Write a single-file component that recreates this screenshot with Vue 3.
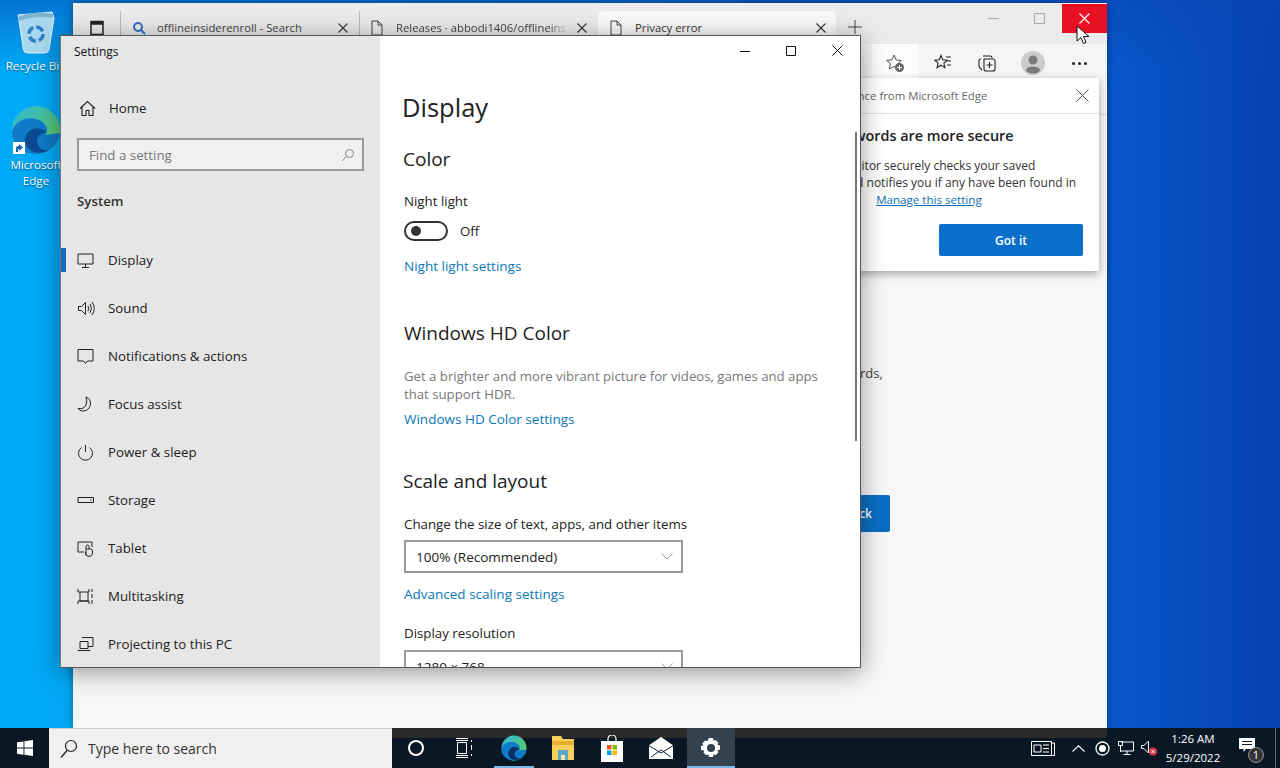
<script setup>
const nav = [
  { label: 'Display', active: true, d: 'M1 2h15v10H1zM8.500 12v3M5 15.500h7' },
  { label: 'Sound', d: 'M1.500 6.500h3l4-4v12l-4-4h-3zM11 6q1.500 2.500 0 5M13 4q3 4.500 0 9M15 2q4.500 6.500 0 13' },
  { label: 'Notifications & actions', d: 'M1 1.500h15v11.500h-5.500l-2 2.500-2-2.500H1z' },
  { label: 'Focus assist', d: 'M9 1q5 2 4.500 7.500Q12 15 5.500 15 2.500 15 1 12.500q6 1 8-3.500 1.500-4 0-8z' },
  { label: 'Power & sleep', d: 'M8.500 1v7M4.500 3.500a7 7 0 1 0 8 0' },
  { label: 'Storage', d: 'M1 5.500h15.500v5H1zM13 8h1.500' },
  { label: 'Tablet', d: 'M7 12H1V2h14v5M9 15V6.500a1.500 1.500 0 0 1 3 0V9M9.500 9h4q2 0 2 2v2a3.500 3.500 0 0 1-7 0v-1' },
  { label: 'Multitasking', d: 'M1 1v3h11V1M3 4v9h8V4M1 16v-3h11v3M15 1v3M15 6v4M15 12v4' },
  { label: 'Projecting to this PC', d: 'M5 1.500h11v9h-5M3 5.500h8v7H3zM0.500 14.500h13' },
]
const tabs = [
  { title: 'offlineinsiderenroll - Search', kind: 'search' },
  { title: 'Releases · abbodi1406/offlineins', kind: 'doc', fade: true },
  { title: 'Privacy error', kind: 'doc', active: true },
]
</script>

<template>
  <div class="screen">
    <main class="desktop">
      <div class="shortcut recycle">
        <svg width="44" height="46" viewBox="0 0 44 46">
          <path d="M4 6 L38 3 L40 9 L35 41 Q34 44 30 44 H14 Q10 44 9.500 41 L5 12 Z" fill="#a9d8ee" stroke="#dff3fb" stroke-width="1" />
          <path d="M4 8 Q21 1 39 5 L39 9 Q21 6 5 12 Z" fill="#7fb4cf" />
          <circle cx="22" cy="25" r="7" fill="none" stroke="#2f7fc4" stroke-width="3.500" stroke-dasharray="8 3" />
        </svg>
        <span>Recycle Bin</span>
      </div>
      <div class="shortcut edge">
        <svg width="50" height="50" viewBox="0 0 50 50">
          <defs>
            <linearGradient id="eg" x1="0" y1="0" x2="1" y2="1"><stop offset="0" stop-color="#2bb5e0" /><stop offset="1" stop-color="#6ad24a" /></linearGradient>
          </defs>
          <circle cx="25" cy="25" r="24" fill="url(#eg)" />
          <path d="M1 27 C4 14 20 10 30 16 C36 20 38 26 34 30 L49 28 C48 40 36 49 25 49 C12 49 1 40 1 27Z" fill="#0f7ac8" />
          <path d="M14 34 C16 22 30 20 36 28 C30 27 24 32 27 40 C29 45 35 47 40 44 C32 50 14 50 14 34Z" fill="#0a4a94" />
        </svg>
        <svg class="badge-arrow" width="12" height="12" viewBox="0 0 12 12"><path d="M0 0h12v12H0z" fill="#fff" /><path d="M3 10V6q0-2 2-2h1V2l4 3.500L6 9V7H5v3z" fill="#1a5fb0" /></svg>
        <span>Microsoft<br />Edge</span>
      </div>

      <section class="browser">
        <div class="tabstrip">
          <div class="tabgroups">
            <svg width="16" height="16" viewBox="0 0 16 16"><path d="M2 1.500h12v13H2zM2 4h12" fill="none" stroke="#222" stroke-width="1.500" /><path d="M2 1h12v3H2z" fill="#222" /></svg>
          </div>
          <div v-for="t in tabs" :key="t.title" class="tab" :class="{ active: t.active }">
            <svg v-if="t.kind === 'search'" class="fav" width="14" height="14" viewBox="0 0 14 14"><circle cx="6" cy="6" r="4" fill="none" stroke="#2f6fc0" stroke-width="2" /><path d="M9 9l4 4" stroke="#2f6fc0" stroke-width="2" /></svg>
            <svg v-else class="fav" width="14" height="16" viewBox="1 0 14 16"><path d="M2 1h6l4 4v10H2zM8 1v4h4" fill="none" stroke="#444" stroke-width="1" /></svg>
            <span class="tabtitle" :class="{ fade: t.fade }">{{ t.title }}</span>
            <svg class="tabx" width="10" height="10" viewBox="0 0 10 10"><path d="M.5.500l9 9M9.500.500l-9 9" stroke="#333" stroke-width="1.100" /></svg>
          </div>
          <svg class="plus" width="14" height="14" viewBox="0 0 14 14"><path d="M7 0v14M0 7h14" stroke="#444" stroke-width="1" /></svg>
          <div class="wincontrols">
            <span class="wc"><i class="dash"></i></span>
            <span class="wc"><i class="box"></i></span>
            <span class="wc close"><svg width="11" height="11" viewBox="0 0 11 11"><path d="M.5.500l10 10M10.500.500l-10 10" stroke="#fff" stroke-width="1.200" /></svg></span>
          </div>
        </div>
        <div class="toolbar">
          <span class="tool addr">
            <svg width="20" height="20" viewBox="0 0 20 20"><path d="M9 2l2.200 5 5.300.5-4 3.500 1.200 5.300L9 13.500 4.300 16l1.200-5.300-4-3.500L6.800 7z" fill="none" stroke="#555" stroke-width="1" /><circle cx="14.500" cy="14.500" r="4.500" fill="#666" /><path d="M14.500 12v5M12 14.500h5" stroke="#fff" /></svg>
          </span>
          <span class="tool favs">
            <svg width="18" height="18" viewBox="0 0 18 18"><path d="M7 1.500l1.800 4.300 4.500.4-3.400 3 1 4.400L7 11.200 3.100 13.600l1-4.400-3.400-3 4.500-.4zM12 3h5M13.500 7h3.500M13 11h4" fill="none" stroke="#222" stroke-width="1.100" /></svg>
          </span>
          <span class="tool">
            <svg width="18" height="18" viewBox="0 0 18 18"><path d="M3 5Q1 5 1 7v5q0 1 1 2l2 2M5 2h7q2 0 2 2M6 5h9q2 0 2 2v8q0 2-2 2H8q-2 0-2-2zM11.500 8v6M8.500 11h6" fill="none" stroke="#222" stroke-width="1.100" /></svg>
          </span>
          <span class="tool">
            <span class="avatar"><svg width="24" height="24" viewBox="0 0 24 24"><circle cx="12" cy="12" r="12" fill="#ccc" /><circle cx="12" cy="9" r="4.500" fill="#7a7a7a" /><ellipse cx="12" cy="19" rx="7" ry="3.500" fill="#7a7a7a" /></svg></span>
          </span>
          <span class="tool dots"><i></i><i></i><i></i></span>
        </div>
        <div class="favbar"></div>
        <div class="page">
          <p class="pagetext">rds,</p>
          <button class="backbtn">Go back</button>
        </div>
        <div class="popup">
          <div class="pophead">
            <span class="pophead-text">Experience from Microsoft Edge</span>
            <svg width="13" height="13" viewBox="0 0 13 13"><path d="M.5.500l12 12M12.500.500l-12 12" stroke="#555" stroke-width="1" /></svg>
          </div>
          <div class="popbody">
            <h3>Your passwords are more secure</h3>
            <p>Password Monitor securely checks your saved</p>
            <p>passwords and notifies you if any have been found in</p>
            <p>an online leak.&nbsp; <a>Manage this setting</a></p>
            <button class="gotit">Got it</button>
          </div>
        </div>
      </section>

      <section class="settings">
        <aside class="side">
          <div class="apptitle">Settings</div>
          <div class="home">
            <svg width="17" height="17" viewBox="0 0 17 17"><path d="M1 8.500L8.500 1.500 16 8.500M3 7v8.500h4v-5h3v5h4V7" fill="none" stroke="#222" stroke-width="1.100" /></svg>
            <span>Home</span>
          </div>
          <div class="find">
            <span>Find a setting</span>
            <svg width="14" height="14" viewBox="0 0 14 14"><circle cx="8.500" cy="5.500" r="4" fill="none" stroke="#888" /><path d="M5.500 8.500L1 13" stroke="#888" /></svg>
          </div>
          <div class="systitle">System</div>
          <nav class="navlist">
            <div v-for="n in nav" :key="n.label" class="navitem" :class="{ active: n.active }">
              <svg width="18" height="17" viewBox="0 0 18 17"><path :d="n.d" fill="none" stroke="#222" stroke-width="1" /></svg>
              <span>{{ n.label }}</span>
            </div>
          </nav>
        </aside>
        <div class="content">
          <div class="captions">
            <svg width="10" height="10" viewBox="0 0 10 10"><path d="M0 5.500h10" stroke="#111" /></svg>
            <svg width="10" height="10" viewBox="0 0 10 10"><path d="M.5.500h9v9h-9z" fill="none" stroke="#111" /></svg>
            <svg width="11" height="11" viewBox="0 0 11 11"><path d="M.5.500l10 10M10.500.500l-10 10" stroke="#111" /></svg>
          </div>
          <h1>Display</h1>
          <h2 class="h-color">Color</h2>
          <div class="label nl">Night light</div>
          <div class="toggle-row">
            <span class="toggle"><i></i></span>
            <span>Off</span>
          </div>
          <a class="link l1">Night light settings</a>
          <h2 class="h-hd">Windows HD Color</h2>
          <p class="muted">Get a brighter and more vibrant picture for videos, games and apps<br />that support HDR.</p>
          <a class="link l2">Windows HD Color settings</a>
          <h2 class="h-scale">Scale and layout</h2>
          <div class="label cs">Change the size of text, apps, and other items</div>
          <div class="select">
            <span>100% (Recommended)</span>
            <svg width="12" height="7" viewBox="0 0 12 7"><path d="M.5.500L6 6 11.500.500" fill="none" stroke="#999" /></svg>
          </div>
          <a class="link l3">Advanced scaling settings</a>
          <div class="label dr">Display resolution</div>
          <div class="select second">
            <span>1280 × 768</span>
            <svg width="12" height="7" viewBox="0 0 12 7"><path d="M.5.500L6 6 11.500.500" fill="none" stroke="#999" /></svg>
          </div>
          <div class="scrollbar"></div>
        </div>
      </section>

      <svg class="cursor" width="14" height="20" viewBox="0 0 14 20"><path d="M1 1v15l4-3.500 2.500 6 2.500-1-2.500-6H13z" fill="#fff" stroke="#111" stroke-width="1" /></svg>
    </main>

    <footer class="taskbar">
      <div class="start">
        <svg width="16" height="16" viewBox="0 0 16 16"><path d="M0 2.300l6.500-.9v6.200H0zM7.400 1.300L16 0v7.600H7.400zM0 8.500h6.500v6.200L0 13.800zM7.400 8.500H16V16l-8.600-1.200z" fill="#fff" /></svg>
      </div>
      <div class="search">
        <svg width="18" height="20" viewBox="0 0 18 20"><circle cx="11" cy="7" r="5.500" fill="none" stroke="#222" stroke-width="1.200" /><path d="M7 11.500L1 18.500" stroke="#222" stroke-width="1.300" /></svg>
        <span>Type here to search</span>
      </div>
      <div class="app"><span class="cortana"></span></div>
      <div class="app">
        <svg width="17" height="20" viewBox="0 0 17 20"><path d="M0 .5h12M0 19.500h12M1.500 4.500h9v11h-9zM0 2.500h12M0 17.500h12M15.500 2v2M15.500 7v5M15.500 16v2" fill="none" stroke="#fff" stroke-width="1" /></svg>
      </div>
      <div class="app running">
        <svg width="26" height="26" viewBox="0 0 50 50">
          <defs>
            <linearGradient id="eg2" x1="0" y1="0" x2="1" y2="1"><stop offset="0" stop-color="#2bb5e0" /><stop offset="1" stop-color="#6ad24a" /></linearGradient>
          </defs>
          <circle cx="25" cy="25" r="24" fill="url(#eg2)" />
          <path d="M1 27 C4 14 20 10 30 16 C36 20 38 26 34 30 L49 28 C48 40 36 49 25 49 C12 49 1 40 1 27Z" fill="#0f7ac8" />
          <path d="M14 34 C16 22 30 20 36 28 C30 27 24 32 27 40 C29 45 35 47 40 44 C32 50 14 50 14 34Z" fill="#0a2f60" />
        </svg>
      </div>
      <div class="app tight">
        <svg width="22" height="24" viewBox="0 0 22 24"><path d="M0 0h9l2 3h11v21H0z" fill="#f6cf5c" /><path d="M0 5h22v4H0z" fill="#e9ad30" /><path d="M6 14h10v10H6z" fill="#5aa7c8" /><path d="M9 19h4v5H9z" fill="#f4e3a5" /></svg>
      </div>
      <div class="app tight">
        <svg width="22" height="27" viewBox="0 0 22 27"><path d="M7 7V4a4 4 0 0 1 8 0v3" fill="none" stroke="#fff" stroke-width="1.200" /><path d="M0 6h22v21H0z" fill="#fff" /><path d="M6 10h4.500v4.500H6z" fill="#f25022" /><path d="M11.500 10H16v4.500h-4.500z" fill="#7fba00" /><path d="M6 15.500h4.500V20H6z" fill="#00a4ef" /><path d="M11.500 15.500H16V20h-4.500z" fill="#ffb900" /></svg>
      </div>
      <div class="app tight">
        <svg width="24" height="22" viewBox="0 0 24 24" preserveAspectRatio="none"><path d="M0 9L12 0l12 9v15H0z" fill="#fff" /><path d="M0 9l12 8 12-8v1L12 18 0 10z" fill="#0a1826" /><path d="M2 22l10-8 10 8" fill="none" stroke="#0a1826" /></svg>
      </div>
      <div class="app settingsapp">
        <svg width="20" height="20" viewBox="0 0 20 20"><path d="M8 0h4l.6 2.800 2-.8 2.800 2.800-1 2 2.600.8v4l-2.600.8 1 2-2.800 2.800-2-1-.6 2.800H8l-.8-2.800-2 1-2.800-2.800 1-2L0 12V8l2.400-.8-1-2L4.200 2.400l2 .8z" fill="#fff" /><circle cx="10" cy="10" r="4" fill="#33424f" /></svg>
      </div>
      <div class="tray">
        <svg class="news" width="24" height="16" viewBox="0 0 24 16"><path d="M.5 1.500h20v14h-20zM20.500 3h3v12.500h-3M3 5h7v7H3zM12 5h6M12 8.500h6M12 12h6" fill="none" stroke="#fff" stroke-width="1" /></svg>
        <svg class="chev" width="13" height="7" viewBox="0 0 13 7"><path d="M.5 6.500L6.500.8l6 5.700" fill="none" stroke="#fff" stroke-width="1.100" /></svg>
        <svg class="rec" width="15" height="15" viewBox="0 0 15 15"><circle cx="7.500" cy="7.500" r="6.500" fill="none" stroke="#fff" stroke-width="1.300" /><circle cx="7.500" cy="7.500" r="3.500" fill="#fff" /></svg>
        <svg class="netw" width="16" height="14" viewBox="0 0 16 14"><path d="M3 1h12.500v9H3M9 10v3M5.500 13.500h7M.5.500h4v4h-4zM2.500 5v6" fill="none" stroke="#fff" stroke-width="1" /></svg>
        <svg class="vol" width="16" height="16" viewBox="0 0 16 16"><path d="M.5 5.500h2.500L7.500 1v12L3 8.500H.5z" fill="none" stroke="#fff" /><circle cx="12" cy="11.500" r="4" fill="#d83b45" /><path d="M10.500 10l3 3M13.500 10l-3 3" stroke="#fff" /></svg>
        <div class="clock"><div>1:26 AM</div><div>5/29/2022</div></div>
        <div class="notif">
          <svg width="16" height="15" viewBox="0 0 16 15"><path d="M0 0h16v11H7l-2.500 3V11H0z" fill="#fff" /><path d="M3 3.500h10M3 6.500h10" stroke="#0a1826" /></svg>
          <span class="count">1</span>
        </div>
        <i class="showdesk"></i>
      </div>
    </footer>
  </div>
</template>

<style>
html, body { margin: 0; padding: 0; overflow: hidden; }
</style>

<style scoped>
.screen {
  width: 1280px; height: 768px; display: flex; flex-direction: column; overflow: hidden;
  font-family: "Open Sans", "Noto Sans", sans-serif; color: #222;
}
.desktop {
  flex: 1; position: relative; overflow: hidden;
  background:
    linear-gradient(180deg, rgba(8, 70, 180, .55) 0, rgba(8, 70, 180, 0) 70px),
    linear-gradient(90deg, #00aaf7 0, #00a8f5 5.7%, #0858cc 86.5%, #0640b0 100%);
}
.shortcut {
  position: absolute; width: 72px; display: flex; flex-direction: column; align-items: center;
  color: #fff; font-size: 11.6px; line-height: 15.500px; text-align: center; text-shadow: 0 1px 2px #0008;
  white-space: nowrap;
}
.recycle { left: 0; top: 9px; }
.recycle span { margin-top: 3px; }
.edge { left: 0; top: 105px; }
.edge span:last-child { margin-top: 2px; }
.badge-arrow { position: absolute; left: 13px; top: 37px; }

.browser {
  position: absolute; left: 73px; top: 3px; width: 1034px; height: 725px;
  background: #f7f7f7; display: flex; flex-direction: column; box-shadow: 0 0 8px #0006;
}
.tabstrip { height: 41px; background: #ebebeb; display: flex; align-items: flex-end; flex: none; position: relative; }
.tabgroups { width: 47px; height: 33px; display: flex; align-items: center; justify-content: center; }
.tab {
  width: 239px; height: 33px; display: flex; align-items: center; box-sizing: border-box; padding: 0 11px 0 11px;
  font-size: 11.300px; color: #444; border-left: 1px solid #bbb; white-space: nowrap;
}
.tab.active { background: #fafafa; border-left: 0; border-radius: 6px 6px 0 0; width: 238px; color: #333; padding: 0 10px 0 12px; }
.fav { flex: none; margin-right: 11px; }
.tabtitle { flex: 1; overflow: hidden; min-width: 0; margin-right: 8px; }
.tabtitle.fade { -webkit-mask-image: linear-gradient(90deg, #000 88%, transparent 100%); mask-image: linear-gradient(90deg, #000 88%, transparent 100%); }
.tabx { flex: none; }
.plus { margin: 0 0 10px 12px; }
.wincontrols { margin-left: auto; align-self: flex-start; display: flex; height: 29px; margin-top: 1px; }
.wc { width: 46px; display: flex; align-items: center; justify-content: center; }
.wc.close { background: #e81123; width: 45px; }
.dash { display: block; width: 11px; height: 1px; background: #aaa; }
.box { display: block; width: 9px; height: 9px; border: 1px solid #aaa; }
.toolbar {
  height: 38px; background: #f5f5f5; display: flex; align-items: center; justify-content: flex-end; flex: none;
  padding-right: 5px; box-sizing: border-box;
}
.tool { width: 46px; height: 38px; display: flex; align-items: center; justify-content: center; flex: none; }
.tool.addr { background: #fdfdfd; }
.tool.favs { padding-left: 3px; box-sizing: border-box; }
.avatar { width: 24px; height: 24px; display: block; }
.dots { gap: 3px; }
.dots i { width: 3px; height: 3px; border-radius: 50%; background: #222; }
.favbar { height: 32px; flex: none; background: #f7f7f7; border-bottom: 1px solid #ddd; }
.page { flex: 1; position: relative; }
.pagetext { position: absolute; left: 787px; top: 249px; margin: 0; font-size: 13px; color: #444; }
.backbtn {
  position: absolute; left: 720px; top: 380px; width: 97px; height: 37px; border: 0; border-radius: 2px;
  background: #0a6fc4; color: #fff; font: 600 12px "Open Sans", sans-serif; text-align: right; padding-right: 18px;
}
.popup {
  position: absolute; left: 627px; top: 75px; width: 399px; height: 193px; background: #fff; border-radius: 2px;
  box-shadow: 0 3px 10px #0005; display: flex; flex-direction: column;
}
.pophead {
  height: 35px; flex: none; box-sizing: content-box; border-bottom: 1px solid #e4e4e4; display: flex; align-items: center; justify-content: space-between;
  padding: 0 10px 0 66px; font-size: 11.400px; color: #666;
}
.pophead-text { margin-left: 52px; white-space: nowrap; }
.popbody { padding: 13px 16px 0 79px; position: relative; flex: 1; }
.popbody h3 { margin: 0 0 12px 7px; font-size: 14.400px; line-height: 18px; font-weight: 600; color: #222; white-space: nowrap; }
.popbody p { margin: 0; font-size: 12px; line-height: 17px; color: #333; white-space: nowrap; }
.popbody a { color: #0a6fb4; text-decoration: underline; margin-left: 10px; font-size: 11.600px; }
.gotit {
  position: absolute; right: 16px; bottom: 15px; width: 144px; height: 32px; border: 0; border-radius: 2px;
  background: #0a6fc8; color: #fff; font: 600 12px "Open Sans", sans-serif;
}

.settings {
  position: absolute; left: 60px; top: 35px; width: 801px; height: 633px; box-sizing: border-box;
  border: 1px solid #555; border-left-color: #777; display: flex; overflow: hidden; box-shadow: 0 4px 24px #0006; background: #fff;
}
.side { width: 319px; flex: none; background: #e6e6e6; font-size: 13.300px; display: flex; flex-direction: column; }
.apptitle { font-size: 12px; color: #111; padding: 8px 0 0 13px; height: 48px; line-height: 15px; box-sizing: border-box; flex: none; }
.home { display: flex; align-items: center; gap: 13px; height: 48px; flex: none; padding-left: 18px; color: #222; }
.find {
  margin: 6px 16px 0 16px; height: 33px; box-sizing: border-box; border: 2px solid #999; background: #f0f0f0;
  display: flex; align-items: center; justify-content: space-between; padding: 0 7px 0 10px; color: #777; flex: none;
}
.systitle { font-weight: 600; color: #333; margin: 21px 0 0 16px; height: 18px; line-height: 18px; flex: none; }
.navlist { margin-top: 26px; }
.navitem { height: 48px; display: flex; align-items: center; gap: 13px; padding-left: 16px; position: relative; color: #222; white-space: nowrap; }
.navitem.active::before { content: ''; position: absolute; left: 0; top: 12px; width: 5px; height: 24px; background: #0a6fc0; }
.content { flex: 1; position: relative; padding-left: 24px; overflow: hidden; font-size: 13.300px; color: #222; }
.captions { position: absolute; top: 9px; right: 17px; display: flex; gap: 36px; align-items: center; }
.content h1 { margin: 0 0 0 -2px; padding-top: 53px; font-size: 25.500px; line-height: 36px; font-weight: 400; color: #222; }
.content h2 { margin: 0; font-size: 19px; line-height: 26px; font-weight: 400; color: #222; }
.content .h-color { padding-top: 21px; margin-left: -1px; }
.label { line-height: 18px; }
.nl { margin-top: 20px; }
.toggle-row { display: flex; align-items: center; gap: 12px; margin-top: 11px; height: 20px; }
.toggle { width: 44px; height: 20px; box-sizing: border-box; border: 2px solid #333; border-radius: 10px; position: relative; display: block; }
.toggle i { position: absolute; left: 5px; top: 3px; width: 10px; height: 10px; border-radius: 50%; background: #333; }
.link { display: block; color: #0a78b8; line-height: 18px; white-space: nowrap; font-size: 13.500px; }
.l1 { margin-top: 16px; }
.content .h-hd { margin-top: 45px; }
.muted { margin: 21px 0 0; color: #777; line-height: 18px; font-size: 13.200px; }
.l2 { margin-top: 7px; }
.content .h-scale { margin-top: 40px; margin-left: -1px; }
.cs { margin-top: 21px; }
.select {
  margin-top: 7px; width: 279px; height: 33px; box-sizing: border-box; border: 2px solid #999; display: flex; align-items: center;
  justify-content: space-between; padding: 0 8px 0 10px; background: #fff; font-size: 13.500px;
}
.select.second { margin-top: 8px; }
.l3 { margin-top: 12px; }
.dr { margin-top: 21px; }
.scrollbar { position: absolute; right: 3px; top: 96px; width: 2px; height: 309px; background: #777; }
.cursor { position: absolute; left: 1076px; top: 25px; }

.taskbar { height: 40px; flex: none; background: #0a1826; display: flex; color: #fff; position: relative; }
.taskbar::before { content: ''; position: absolute; left: 392px; top: 0; width: 715px; height: 10px; background: #2b2b2b; }
.start { width: 49px; display: flex; align-items: center; justify-content: center; position: relative; }
.search {
  width: 343px; background: #f0f0f0; color: #333; display: flex; align-items: center; gap: 10px; padding-left: 11px;
  box-sizing: border-box; font-size: 14px; position: relative; border-top: 1px solid #ccc;
}
.app { width: 48px; display: flex; align-items: center; justify-content: center; position: relative; flex: none; }
.app.tight { margin-left: 1px; }
.running { margin-left: 2px; }
.running::after { content: ''; position: absolute; left: 4px; right: 4px; bottom: 0; height: 2px; background: #76b9ed; }
.settingsapp { margin-left: 2px; background: #33424f; }
.settingsapp::after { content: ''; position: absolute; left: 0; right: 0; bottom: 0; height: 2px; background: #76b9ed; }
.cortana { width: 12px; height: 12px; border: 2px solid #fff; border-radius: 50%; display: block; }
.tray { margin-left: auto; display: flex; align-items: center; position: relative; font-size: 11.500px; padding-right: 4px; }
.news { margin-right: 17px; }
.chev { margin-right: 10px; }
.rec { margin-right: 8px; }
.netw { margin-right: 7px; }
.clock { width: 60px; margin-left: 6px; text-align: center; line-height: 19px; white-space: nowrap; }
.notif { width: 48px; height: 40px; margin-right: 4px; display: flex; align-items: center; justify-content: center; position: relative; }
.notif svg { margin-top: -6px; }
.count {
  position: absolute; left: 25px; top: 19px; width: 14px; height: 14px; line-height: 14px; border: 1px solid #999; border-radius: 50%;
  background: #333; font-size: 11px; text-align: center; color: #fff;
}
.showdesk { display: block; width: 1px; height: 40px; background: #667; }
</style>
